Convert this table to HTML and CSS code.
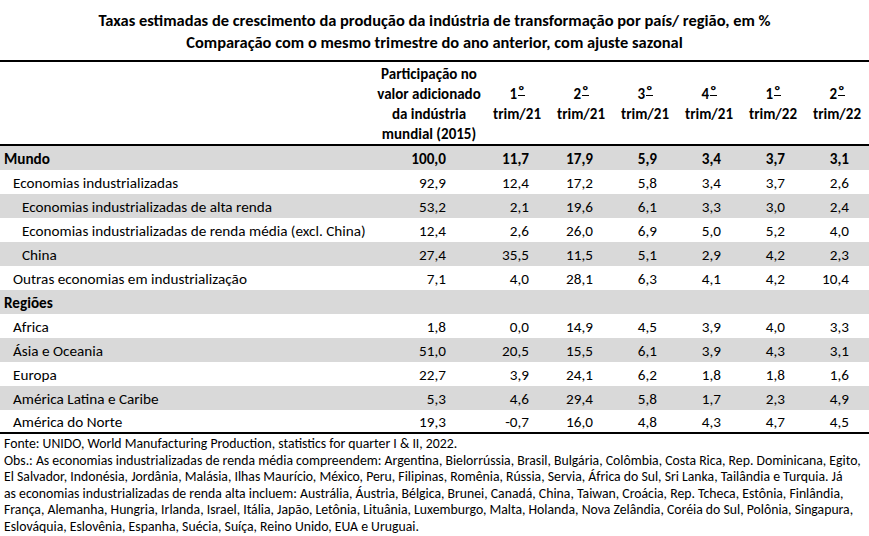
FILE: index.html
```html
<!DOCTYPE html>
<html lang="pt">
<head>
<meta charset="utf-8">
<title>Taxas estimadas de crescimento</title>
<link rel="stylesheet" href="styles.css">
</head>
<body>
<div class="title">
  <div>Taxas estimadas de crescimento da produção da indústria de transformação por país/ região, em %</div>
  <div>Comparação com o mesmo trimestre do ano anterior, com ajuste sazonal</div>
</div>
<table class="data">
  <colgroup>
    <col class="c-label"><col class="c-part"><col class="c-q"><col class="c-q"><col class="c-q"><col class="c-q"><col class="c-q"><col class="c-q">
  </colgroup>
  <thead>
    <tr>
      <th></th>
      <th class="h-part">Participação no<br>valor adicionado<br>da indústria<br>mundial (2015)</th>
      <th>1<span class="ord">º</span><br>trim/21</th>
      <th>2<span class="ord">º</span><br>trim/21</th>
      <th>3<span class="ord">º</span><br>trim/21</th>
      <th>4<span class="ord">º</span><br>trim/21</th>
      <th>1<span class="ord">º</span><br>trim/22</th>
      <th>2<span class="ord">º</span><br>trim/22</th>
    </tr>
  </thead>
  <tbody>
    <tr class="gray bold"><td class="l0">Mundo</td><td class="p">100,0</td><td>11,7</td><td>17,9</td><td>5,9</td><td>3,4</td><td>3,7</td><td>3,1</td></tr>
    <tr><td class="l1">Economias industrializadas</td><td class="p">92,9</td><td>12,4</td><td>17,2</td><td>5,8</td><td>3,4</td><td>3,7</td><td>2,6</td></tr>
    <tr class="gray"><td class="l2">Economias industrializadas de alta renda</td><td class="p">53,2</td><td>2,1</td><td>19,6</td><td>6,1</td><td>3,3</td><td>3,0</td><td>2,4</td></tr>
    <tr><td class="l2">Economias industrializadas de renda média (excl. China)</td><td class="p">12,4</td><td>2,6</td><td>26,0</td><td>6,9</td><td>5,0</td><td>5,2</td><td>4,0</td></tr>
    <tr class="gray"><td class="l2">China</td><td class="p">27,4</td><td>35,5</td><td>11,5</td><td>5,1</td><td>2,9</td><td>4,2</td><td>2,3</td></tr>
    <tr><td class="l1">Outras economias em industrialização</td><td class="p">7,1</td><td>4,0</td><td>28,1</td><td>6,3</td><td>4,1</td><td>4,2</td><td>10,4</td></tr>
    <tr class="gray bold"><td class="l0">Regiões</td><td class="p"></td><td></td><td></td><td></td><td></td><td></td><td></td></tr>
    <tr><td class="l1">Africa</td><td class="p">1,8</td><td>0,0</td><td>14,9</td><td>4,5</td><td>3,9</td><td>4,0</td><td>3,3</td></tr>
    <tr class="gray"><td class="l1">Ásia e Oceania</td><td class="p">51,0</td><td>20,5</td><td>15,5</td><td>6,1</td><td>3,9</td><td>4,3</td><td>3,1</td></tr>
    <tr><td class="l1">Europa</td><td class="p">22,7</td><td>3,9</td><td>24,1</td><td>6,2</td><td>1,8</td><td>1,8</td><td>1,6</td></tr>
    <tr class="gray"><td class="l1">América Latina e Caribe</td><td class="p">5,3</td><td>4,6</td><td>29,4</td><td>5,8</td><td>1,7</td><td>2,3</td><td>4,9</td></tr>
    <tr class="last"><td class="l1">América do Norte</td><td class="p">19,3</td><td>-0,7</td><td>16,0</td><td>4,8</td><td>4,3</td><td>4,7</td><td>4,5</td></tr>
  </tbody>
</table>
<div class="notes">
  <div>Fonte: UNIDO, World Manufacturing Production, statistics for quarter I &amp; II, 2022.</div>
  <div>Obs.: As economias industrializadas de renda média compreendem: Argentina, Bielorrússia, Brasil, Bulgária, Colômbia, Costa Rica, Rep. Dominicana, Egito,</div>
  <div>El Salvador, Indonésia, Jordânia, Malásia, Ilhas Maurício, México, Peru, Filipinas, Romênia, Rússia, Servia, África do Sul, Sri Lanka, Tailândia e Turquia. Já</div>
  <div>as economias industrializadas de renda alta incluem: Austrália, Áustria, Bélgica, Brunei, Canadá, China, Taiwan, Croácia, Rep. Tcheca, Estônia, Finlândia,</div>
  <div>França, Alemanha, Hungria, Irlanda, Israel, Itália, Japão, Letônia, Lituânia, Luxemburgo, Malta, Holanda, Nova Zelândia, Coréia do Sul, Polônia, Singapura,</div>
  <div>Eslováquia, Eslovênia, Espanha, Suécia, Suíça, Reino Unido, EUA e Uruguai.</div>
</div>
</body>
</html>
```

FILE: styles.css
```css
html, body {
  margin: 0;
  padding: 0;
  background: #ffffff;
}
body {
  width: 869px;
  font-family: Carlito, Lato, "Liberation Sans", sans-serif;
  color: #000000;
  font-size: 15.2px;
}
.title {
  padding-top: 9px;
  height: 51px;
  text-align: center;
  font-weight: bold;
  font-size: 16.45px;
  line-height: 22px;
  white-space: nowrap;
}
.data {
  border-collapse: collapse;
  table-layout: fixed;
  width: 869px;
  border-top: 2px solid #000;
  border-bottom: 2px solid #000;
}
.c-label { width: 375px; }
.c-part { width: 110px; }
.c-q { width: 64px; }
.data th {
  font-weight: bold;
  font-size: 15px;
  text-align: center;
  line-height: 20px;
  padding: 1px 0 0 0;
  height: 81px;
  vertical-align: middle;
  border-bottom: 2px solid #000;
  white-space: nowrap;
}
.data th.h-part { padding-right: 2px; }
.ord {
  display: inline-block;
  line-height: 8px;
  border-bottom: 1.5px solid #000;
  margin-left: 1px;
  vertical-align: 3px;
}
.data td {
  padding: 2px 20px 0 0;
  text-align: right;
  white-space: nowrap;
  line-height: 22px;
}
.data td.p { padding-right: 39px; }
.data tr.last td { padding-top: 3px; line-height: 19px; }
.data td.l0 { text-align: left; padding-left: 4px; }
.data td.l1 { text-align: left; padding-left: 13px; }
.data td.l2 { text-align: left; padding-left: 22px; }
.gray td { background: #d9d9d9; }
.bold td { font-weight: bold; }
.notes {
  padding-top: 2px;
  padding-left: 4px;
  font-size: 13.75px;
  line-height: 16.6px;
  white-space: nowrap;
}
```
